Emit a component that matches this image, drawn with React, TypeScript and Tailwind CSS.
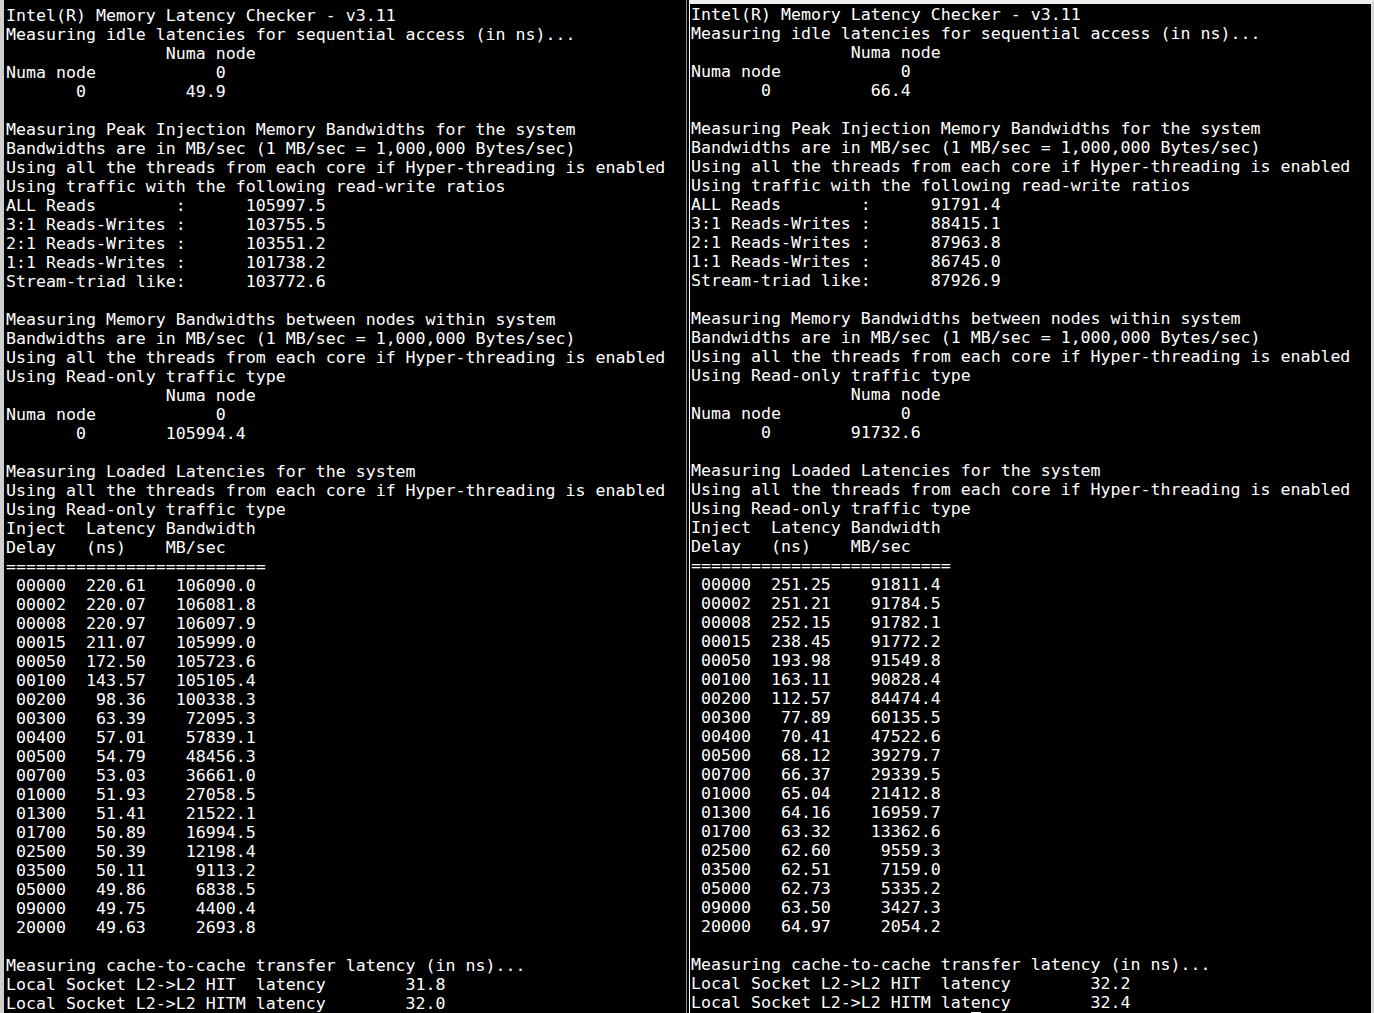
type Run = {
  idle: string;
  peak: string[];
  node: string;
  rows: [string, string, string][];
  hit: string;
  hitm: string;
};

const left: Run = {
  idle: "49.9",
  peak: ["105997.5", "103755.5", "103551.2", "101738.2", "103772.6"],
  node: "105994.4",
  rows: [
    ["00000", "220.61", "106090.0"],
    ["00002", "220.07", "106081.8"],
    ["00008", "220.97", "106097.9"],
    ["00015", "211.07", "105999.0"],
    ["00050", "172.50", "105723.6"],
    ["00100", "143.57", "105105.4"],
    ["00200", "98.36", "100338.3"],
    ["00300", "63.39", "72095.3"],
    ["00400", "57.01", "57839.1"],
    ["00500", "54.79", "48456.3"],
    ["00700", "53.03", "36661.0"],
    ["01000", "51.93", "27058.5"],
    ["01300", "51.41", "21522.1"],
    ["01700", "50.89", "16994.5"],
    ["02500", "50.39", "12198.4"],
    ["03500", "50.11", "9113.2"],
    ["05000", "49.86", "6838.5"],
    ["09000", "49.75", "4400.4"],
    ["20000", "49.63", "2693.8"],
  ],
  hit: "31.8",
  hitm: "32.0",
};

const right: Run = {
  idle: "66.4",
  peak: ["91791.4", "88415.1", "87963.8", "86745.0", "87926.9"],
  node: "91732.6",
  rows: [
    ["00000", "251.25", "91811.4"],
    ["00002", "251.21", "91784.5"],
    ["00008", "252.15", "91782.1"],
    ["00015", "238.45", "91772.2"],
    ["00050", "193.98", "91549.8"],
    ["00100", "163.11", "90828.4"],
    ["00200", "112.57", "84474.4"],
    ["00300", "77.89", "60135.5"],
    ["00400", "70.41", "47522.6"],
    ["00500", "68.12", "39279.7"],
    ["00700", "66.37", "29339.5"],
    ["01000", "65.04", "21412.8"],
    ["01300", "64.16", "16959.7"],
    ["01700", "63.32", "13362.6"],
    ["02500", "62.60", "9559.3"],
    ["03500", "62.51", "7159.0"],
    ["05000", "62.73", "5335.2"],
    ["09000", "63.50", "3427.3"],
    ["20000", "64.97", "2054.2"],
  ],
  hit: "32.2",
  hitm: "32.4",
};

const usingAll = "Using all the threads from each core if Hyper-threading is enabled";
const bwUnits = "Bandwidths are in MB/sec (1 MB/sec = 1,000,000 Bytes/sec)";
const peakLabels = ["ALL Reads        :", "3:1 Reads-Writes :", "2:1 Reads-Writes :", "1:1 Reads-Writes :", "Stream-triad like:"];

function buildLines(r: Run): string[] {
  return [
    "Intel(R) Memory Latency Checker - v3.11",
    "Measuring idle latencies for sequential access (in ns)...",
    "                Numa node",
    "Numa node            0",
    "       0          " + r.idle,
    "",
    "Measuring Peak Injection Memory Bandwidths for the system",
    bwUnits,
    usingAll,
    "Using traffic with the following read-write ratios",
    ...r.peak.map((v, i) => peakLabels[i] + "      " + v),
    "",
    "Measuring Memory Bandwidths between nodes within system ",
    bwUnits,
    usingAll,
    "Using Read-only traffic type",
    "                Numa node",
    "Numa node            0",
    "       0        " + r.node,
    "",
    "Measuring Loaded Latencies for the system",
    usingAll,
    "Using Read-only traffic type",
    "Inject  Latency Bandwidth",
    "Delay   (ns)    MB/sec",
    "==========================",
    ...r.rows.map(([d, l, b]) => " " + d + "  " + l.padStart(6) + "   " + b.padStart(8)),
    "",
    "Measuring cache-to-cache transfer latency (in ns)...",
    "Local Socket L2->L2 HIT  latency        " + r.hit,
    "Local Socket L2->L2 HITM latency        " + r.hitm,
  ];
}

const Screen = ({ lines }: { lines: string[] }) => (
  <div className="whitespace-pre font-['DejaVu_Sans_Mono',monospace] text-[16.6px] leading-[19px] text-white">
    {lines.map((l, i) => (
      <div key={i} className="h-[19px]">
        {l || " "}
      </div>
    ))}
    <div className="h-[19px]">
      {" ".repeat(28)}
      <span className="inline-block h-[19px] w-[10px] bg-white align-top" />
    </div>
  </div>
);

export default function App() {
  return (
    <div className="flex h-[1013px] w-[1374px] overflow-hidden bg-black">
      <div className="w-[687px] shrink-0 overflow-hidden border-l-4 border-r border-l-[#cfcfcf] border-r-[#8a8a8a] pl-[2px] pt-[6px]">
        <Screen lines={buildLines(left)} />
      </div>
      <div className="w-[2px] shrink-0 bg-black" />
      <div className="flex-1 overflow-hidden border-l border-t-4 border-r-[3px] border-l-white border-t-[#efeeec] border-r-[#dcdad6] pl-[1px] pt-[1px]">
        <Screen lines={buildLines(right)} />
      </div>
    </div>
  );
}
